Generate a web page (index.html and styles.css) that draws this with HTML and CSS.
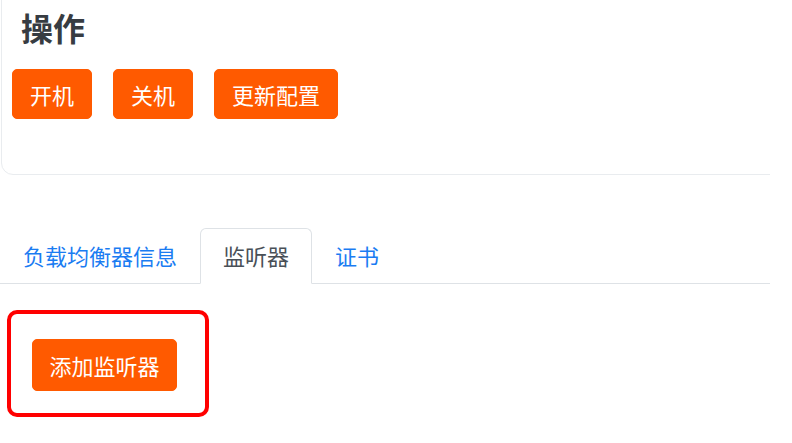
FILE: index.html
```html
<!DOCTYPE html>
<html lang="zh">
<head>
<meta charset="utf-8">
<link rel="stylesheet" href="styles.css">
</head>
<body>
<main class="page">
  <section class="card">
    <h2 class="card-title">操作</h2>
    <div class="actions">
      <button class="btn">开机</button>
      <button class="btn">关机</button>
      <button class="btn">更新配置</button>
    </div>
  </section>
  <ul class="tabs">
    <li class="tab">负载均衡器信息</li>
    <li class="tab active">监听器</li>
    <li class="tab">证书</li>
  </ul>
  <div class="highlight">
    <button class="btn btn-add">添加监听器</button>
  </div>
</main>
</body>
</html>
```
FILE: styles.css
```css
* { box-sizing: border-box; }
html, body { margin: 0; padding: 0; background: #fff; }
body {
  font-family: "Noto Sans CJK SC", "Noto Sans", sans-serif;
  width: 792px;
  height: 443px;
  overflow: hidden;
}
.page {
  width: 770px;
  overflow: hidden;
}
.card {
  margin: -20px 0 0 1px;
  width: 820px;
  border: 1px solid #e9ecef;
  border-radius: 12px;
  padding: 26px 10px 55px 10px;
}
.card-title {
  margin: 0 0 22px 0;
  padding-left: 9px;
  font-size: 32px;
  line-height: 40px;
  font-weight: 700;
  color: #373c42;
}
.actions {
  display: flex;
  gap: 21px;
}
.btn {
  font-family: inherit;
  font-size: 22px;
  line-height: 32px;
  padding: 8px 17px;
  border: 1px solid #ff5a00;
  background: #ff5a00;
  color: #fff;
  border-radius: 5px;
  margin: 0;
}
.tabs {
  list-style: none;
  margin: 53px 0 0 0;
  padding: 0;
  width: 770px;
  display: flex;
  border-bottom: 1px solid #dee2e6;
}
.tab {
  font-size: 22px;
  line-height: 33px;
  padding: 10px 22px 11px 22px;
  border: 1px solid transparent;
  border-top-left-radius: 6px;
  border-top-right-radius: 6px;
  margin-bottom: -1px;
  color: #1a7cf2;
}
.tab.active {
  color: #495057;
  background: #fff;
  border-color: #dee2e6 #dee2e6 #fff;
}
.highlight {
  margin: 26px 0 6px 7px;
  width: 202px;
  border: 4px solid #ff0000;
  border-radius: 10px;
  padding: 25px 28px 22px 21px;
}
.btn-add {
  line-height: 34px;
  padding: 8px 16.5px;
}
```
